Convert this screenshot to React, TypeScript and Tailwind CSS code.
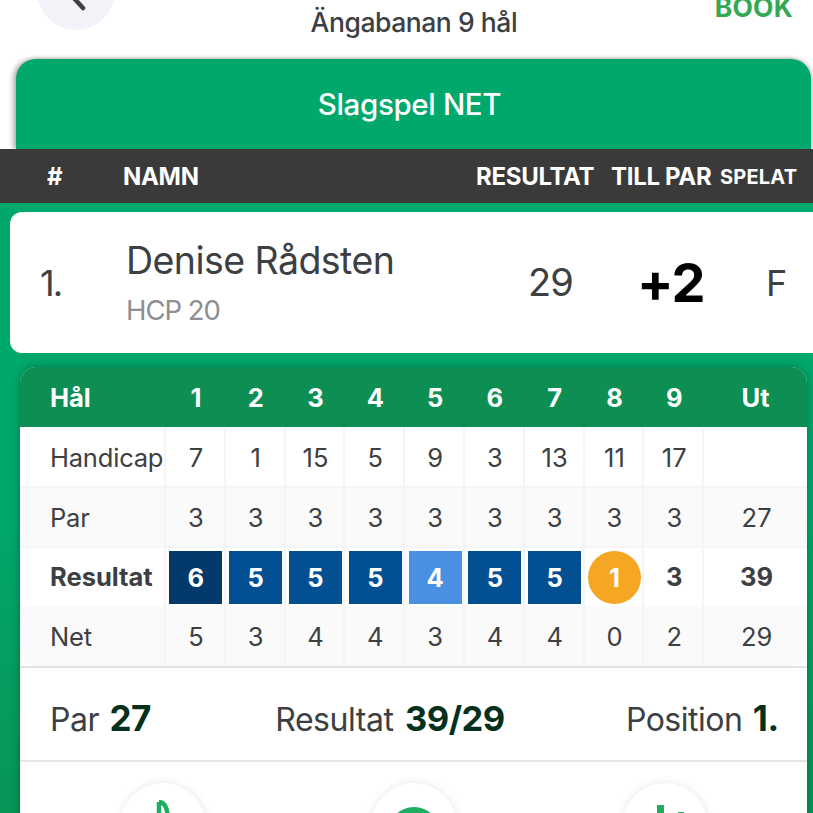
const holes = ["1", "2", "3", "4", "5", "6", "7", "8", "9"];
const hcp = ["7", "1", "15", "5", "9", "3", "13", "11", "17"];
const par = ["3", "3", "3", "3", "3", "3", "3", "3", "3"];
const net = ["5", "3", "4", "4", "3", "4", "4", "0", "2"];
const res = [
  { v: "6", c: "bg-[#033a6b]" },
  { v: "5", c: "bg-[#024f91]" },
  { v: "5", c: "bg-[#024f91]" },
  { v: "5", c: "bg-[#024f91]" },
  { v: "4", c: "bg-[#4a90e2]" },
  { v: "5", c: "bg-[#024f91]" },
  { v: "5", c: "bg-[#024f91]" },
];
const grid = "grid grid-cols-[146px_repeat(9,59.8px)_1fr]";
const cell = "flex items-center justify-center border-r-2 border-[#f5f5f8] pl-[2px]";

function Row({ label, values, total, cls, pad }: { label: string; values: string[]; total: string; cls: string; pad: string }) {
  return (
    <div className={`${grid} text-[25.5px] text-[#3c4043] border-b-2 ${cls}`}>
      <div className={`flex items-center pl-[30px] border-r-2 border-[#f5f5f8] tracking-[-0.2px] ${pad}`}>{label}</div>
      {values.map((v, i) => (
        <div key={i} className={`${cell} ${pad}`}>{v}</div>
      ))}
      <div className={`flex items-center justify-center pl-[2px] ${pad}`}>{total}</div>
    </div>
  );
}

function Circle({ children }: { children: React.ReactNode }) {
  return (
    <div className="w-[86px] h-[86px] rounded-full bg-white shadow-[0_0_8px_rgba(0,0,0,0.1)] flex justify-center shrink-0">
      {children}
    </div>
  );
}

export default function App() {
  return (
    <div className="w-[813px] h-[813px] overflow-hidden bg-white font-['Inter',sans-serif]">
      <div className="-mt-[48px] h-[107px] flex items-start pl-[37px] pr-[20px] relative">
        <div className="w-[78px] h-[78px] rounded-full bg-[#f3f2f8] flex items-center justify-center shrink-0">
          <svg width="40" height="40" viewBox="0 0 40 40" fill="none" stroke="#3c4043" strokeWidth="4.5" strokeLinecap="round" strokeLinejoin="round">
            <path d="M32 2 L20 20 L32 33" transform="translate(-5 4)" />
          </svg>
        </div>
        <div className="flex-1 flex flex-col items-center pt-[52px] pr-[2px]">
          <div className="text-[26.5px] leading-[36px] font-medium text-[#3c4043] tracking-[-0.45px]">Ängabanan 9 hål</div>
        </div>
        <div className="pt-[37px] text-[26.5px] leading-[36px] font-bold text-[#34a853] tracking-[0.2px]">BOOK</div>
      </div>

      <div className="ml-[16px] mr-[2px] h-[90px] rounded-t-[20px] bg-[#00a86b] shadow-[-3px_0_5px_rgba(0,0,0,0.3),2px_0_4px_rgba(0,0,0,0.2)] flex items-center justify-center pr-[8px] text-[29.5px] font-medium text-white tracking-[-0.35px]">
        Slagspel NET
      </div>
      <div className="relative h-[54px] pt-[2px] bg-[#3a3a3a] flex items-center text-white font-bold text-[24px] tracking-[-0.3px]">
        <div className="w-[123px] pl-[47px]">#</div>
        <div className="flex-1">NAMN</div>
        <div className="w-[135px]">RESULTAT</div>
        <div className="w-[109px] whitespace-nowrap">TILL PAR</div>
        <div className="w-[93px] text-[20px] whitespace-nowrap tracking-[0.2px]">SPELAT</div>
      </div>

      <div className="h-[610px] bg-gradient-to-b from-[#00a86b] via-[#00a86b] to-[#079556] pt-[9px]">
        <div className="ml-[10px] h-[141px] bg-white rounded-l-[12px] flex items-center text-[#3c4043]">
          <div className="w-[116px] pl-[30px] text-[36px] tracking-[-2px]">1.</div>
          <div className="flex-1 flex flex-col pt-[10px]">
            <div className="text-[37.5px] leading-[44px] tracking-[-0.55px]">Denise Rådsten</div>
            <div className="text-[27.5px] leading-[54px] text-[#8e8e93] tracking-[-1px]">HCP 20</div>
          </div>
          <div className="w-[109px] text-[38px] tracking-[-1px]">29</div>
          <div className="w-[129px] text-[54px] font-bold text-black tracking-[-1px]">+2</div>
          <div className="w-[47px] text-[36px]">F</div>
        </div>

        <div className="ml-[20px] mr-[6px] mt-[14px] bg-white rounded-t-[16px] shadow-[0_0_10px_rgba(0,0,0,0.3)]">
          <div className={`${grid} h-[60px] bg-[#0d8f53] rounded-t-[16px] text-white font-bold text-[25.5px]`}>
            <div className="flex items-center pl-[30px] pt-[2px]">Hål</div>
            {holes.map((h) => (
              <div key={h} className="flex items-center justify-center pt-[2px]">{h}</div>
            ))}
            <div className="flex items-center justify-center pt-[2px]">Ut</div>
          </div>
          <Row label="Handicap" values={hcp} total="" cls="h-[61px] bg-white border-[#f5f5f8]" pad="pt-[3px]" />
          <Row label="Par" values={par} total="27" cls="h-[60px] bg-[#fafafa] border-[#f5f5f8]" pad="pt-[3px]" />
          <div className={`${grid} h-[58px] text-[25.5px] font-bold text-[#3c4043] bg-white`}>
            <div className="flex items-center pl-[30px] pt-[1px] border-r-2 border-[#f5f5f8]">Resultat</div>
            {res.map((r, i) => (
              <div key={i} className={cell}>
                <div className={`w-[53px] h-[53px] pt-[2px] flex items-center justify-center text-white ${r.c}`}>{r.v}</div>
              </div>
            ))}
            <div className={cell}>
              <div className="w-[53px] h-[53px] pt-[2px] rounded-full bg-[#f5a623] flex items-center justify-center text-white">1</div>
            </div>
            <div className={`${cell} pt-[1px]`}>3</div>
            <div className="flex items-center justify-center pt-[1px] pl-[2px]">39</div>
          </div>
          <div className="bg-white border-b-2 border-[#e2e2e2]">
            <Row label="Net" values={net} total="29" cls="h-[60px] bg-[#fafafa] border-transparent rounded-b-[16px]" pad="pt-[5px]" />
          </div>
          <div className="h-[94px] pt-[9px] flex items-center justify-between pl-[30px] pr-[28px] border-b-2 border-[#e6e6e6] text-[32px] text-[#3c4043]">
            <div className="tracking-[-0.5px]">Par <b className="font-bold text-[#05301d] text-[35px] ml-[2px] tracking-[-0.4px]">27</b></div>
            <div className="tracking-[-0.45px] pl-[3px]">Resultat <b className="font-bold text-[#05301d] text-[34.5px] ml-[3px] tracking-[-0.5px]">39/29</b></div>
            <div className="tracking-[-0.5px]">Position <b className="font-bold text-[#05301d] text-[35px] ml-[2px] tracking-[-0.3px]">1.</b></div>
          </div>
          <div className="h-[60px] flex justify-between pl-[100px] pr-[99px] pt-[21px] overflow-hidden">
            <Circle>
              <svg className="mt-[17px]" width="30" height="40" viewBox="0 0 30 40" fill="none" stroke="#1fad5f" strokeWidth="4.5">
                <path d="M11 2 C18 2 20 10 20 22 M11 2 V24" />
              </svg>
            </Circle>
            <Circle>
              <svg className="mt-[24px]" width="52" height="52" viewBox="0 0 52 52">
                <circle cx="26" cy="26" r="26" fill="#1fad5f" />
              </svg>
            </Circle>
            <Circle>
              <svg className="mt-[22px]" width="40" height="40" viewBox="0 0 40 40" fill="#1fad5f">
                <rect x="12" y="0" width="7" height="40" />
                <rect x="33" y="7" width="6" height="33" />
              </svg>
            </Circle>
          </div>
        </div>
      </div>
    </div>
  );
}
